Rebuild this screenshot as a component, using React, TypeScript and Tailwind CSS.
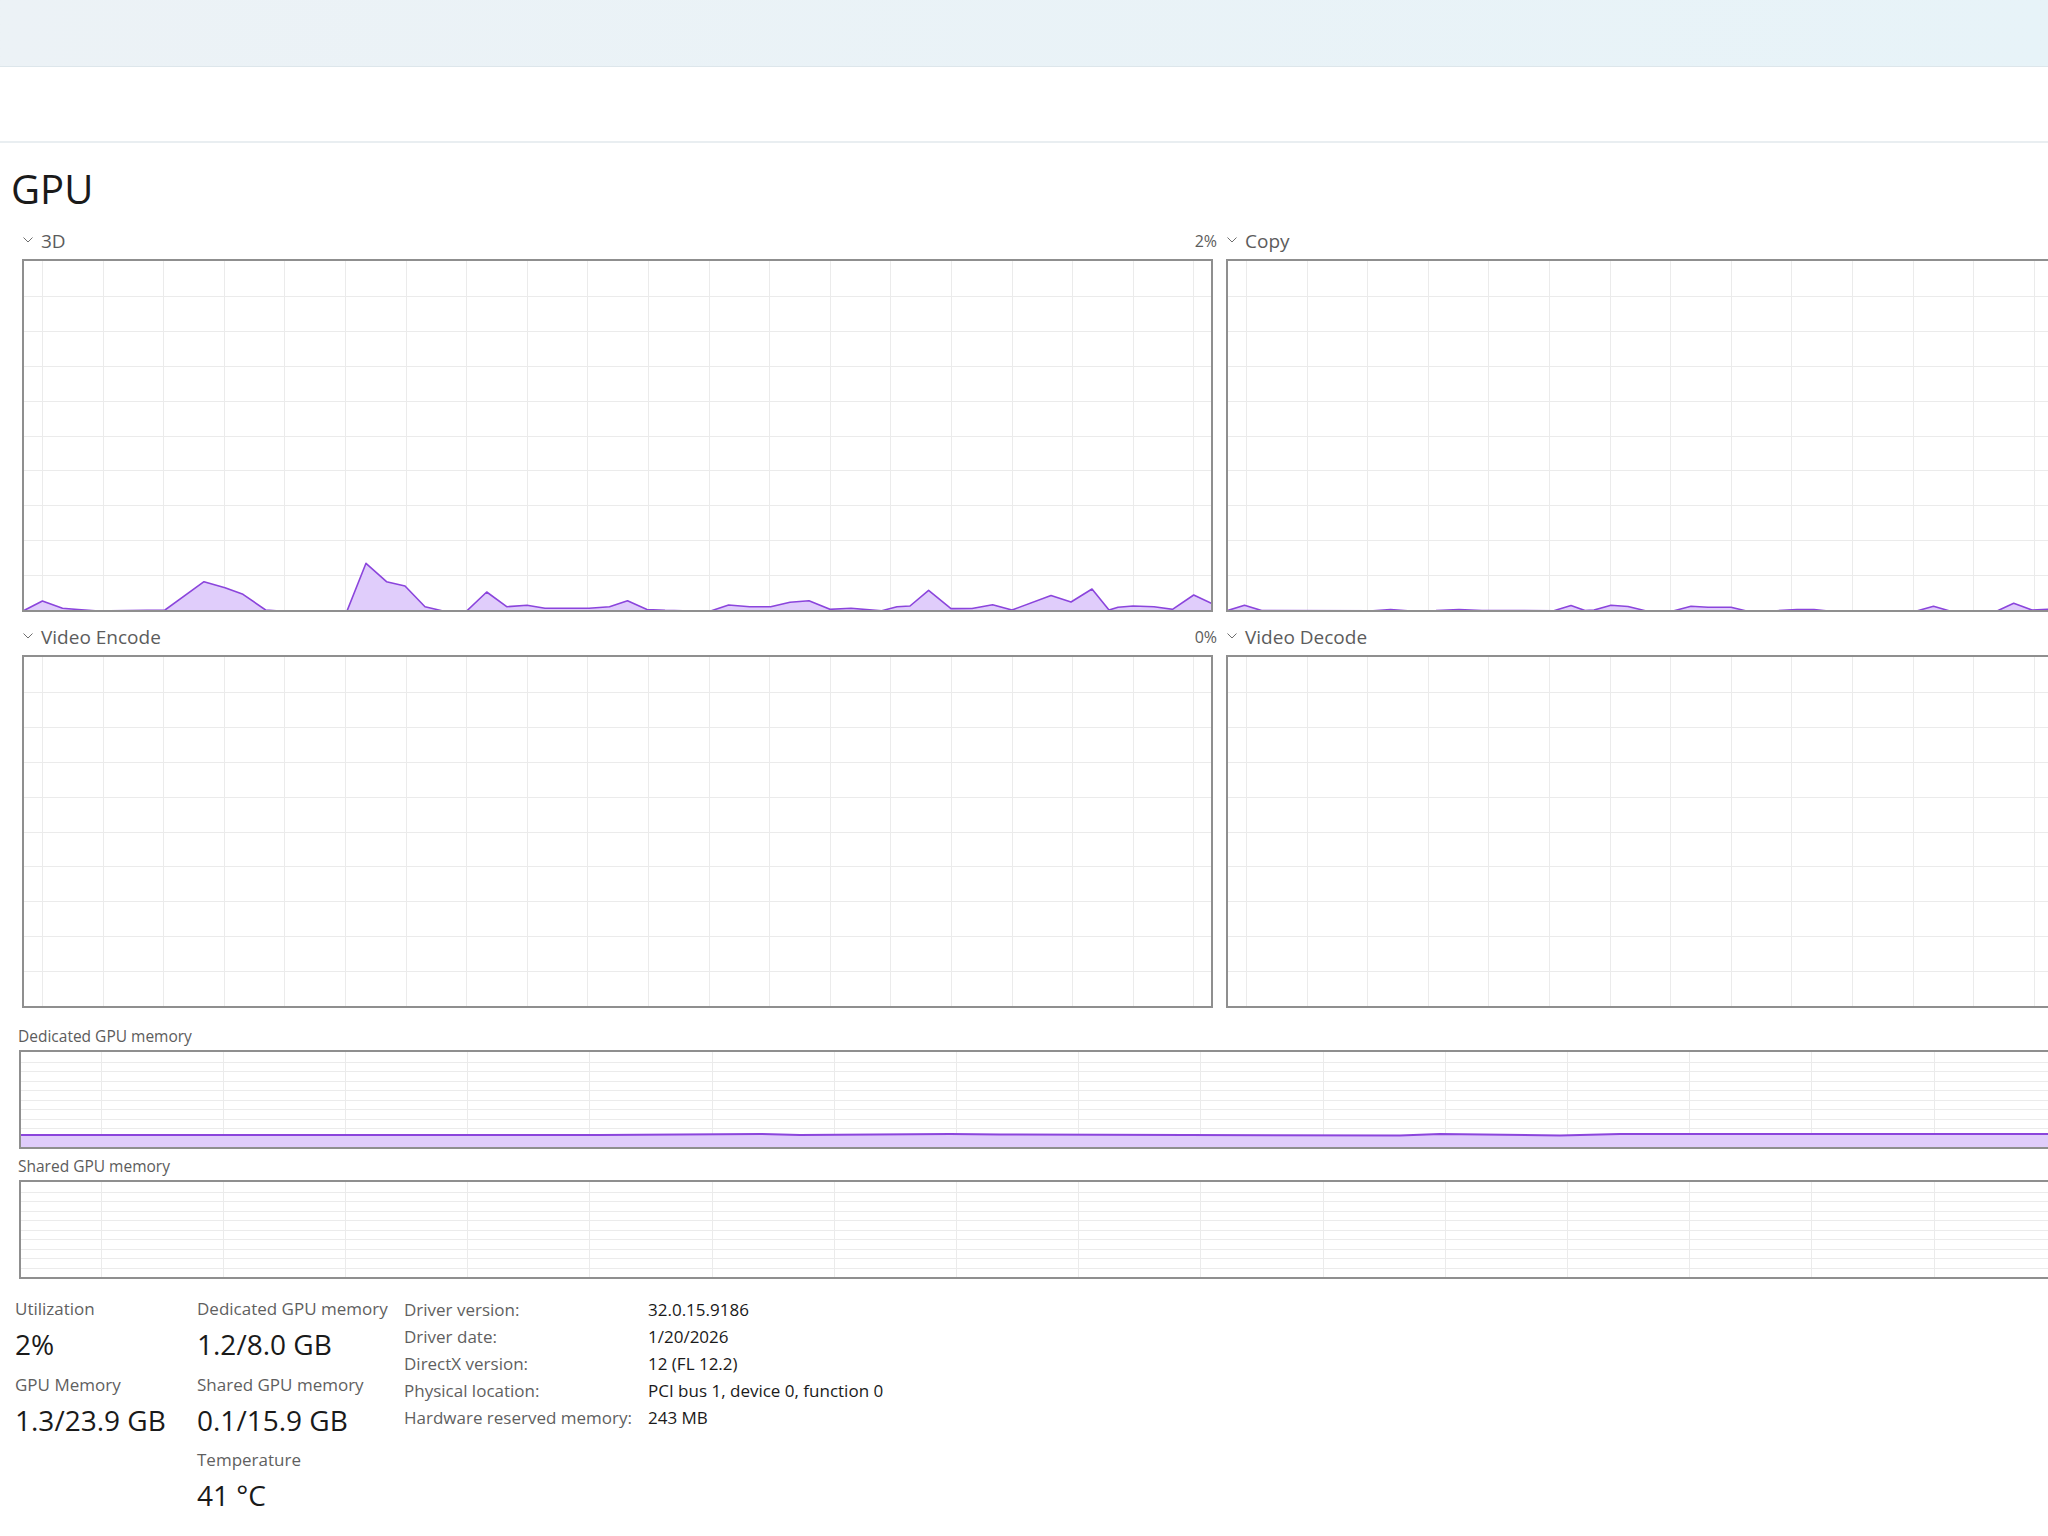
import React from "react";

// GPU performance page, Task Manager style.

type Pt = [number, number];

const GRID = "#ebebeb";
const LINE = "#8b45dc";
const FILL = "#e0cdfb";

// page coordinates of the samples, converted to the plot's own space below
const load3d: Pt[] = [
  [23, 611], [42.4, 601], [62.5, 608.3], [78, 609.5], [98, 611], [129, 610.5], [165, 610],
  [204, 581.7], [225, 587.7], [243, 594.3], [265.6, 610], [279, 611], [347, 611],
  [366, 563.3], [386.5, 581.7], [405, 586], [425, 606.7], [442, 610.7], [467, 610.7],
  [486.7, 592], [506.7, 606.7], [527, 605.2], [545, 608.3], [589, 608.3], [609.5, 606.7],
  [627.5, 600.8], [647, 609.5], [665, 610.3], [683, 610.7], [711.4, 610.7], [728.6, 605],
  [749.7, 606.7], [770.7, 606.7], [790, 602.3], [809, 600.7], [830, 609.3], [851, 608.3],
  [881.7, 610.7], [897, 606.7], [910, 606], [928.6, 590.3], [951, 608.6], [972, 608.5],
  [992.6, 604.7], [1012, 610], [1051, 595.5], [1071, 602], [1092, 589], [1109, 610],
  [1118, 607.3], [1133, 606], [1154, 606.7], [1172.5, 609.3], [1193.7, 595], [1213, 604],
];

const loadCopy: Pt[] = [
  [1227, 610.7], [1244.5, 605.3], [1261.7, 610.5], [1373, 610.7], [1390.5, 609.5],
  [1407.7, 610.7], [1436, 610.5], [1459, 609.5], [1482, 610.5], [1553.8, 610.7],
  [1571, 605.5], [1585, 610.5], [1594, 610], [1611, 605.3], [1628, 606.5], [1645.4, 610.7],
  [1674, 610.7], [1691, 606.3], [1708, 607.3], [1731, 607.3], [1745.6, 610.7], [1777, 610.7],
  [1797, 609.5], [1814, 609.5], [1826, 610.7], [1917.5, 610.7], [1933.5, 606.3],
  [1949, 610.7], [1997.6, 610.7], [2013.7, 603.3], [2032, 610], [2048, 609.3], [2070, 610.7],
];

const dedicated: Pt[] = [
  [19, 1135], [600, 1135], [760, 1134], [800, 1135], [950, 1134], [1000, 1134.5],
  [1400, 1135.5], [1440, 1134], [1560, 1135.5], [1620, 1134], [2421, 1134],
];

function Plot({
  w, h, ox, oy, colStart, colStep, rows, pts, lineWidth = 1.6,
}: {
  w: number; h: number; ox: number; oy: number;
  colStart: number; colStep: number; rows: number; pts?: Pt[]; lineWidth?: number;
}) {
  const cols: number[] = [];
  for (let x = colStart; x < w; x += colStep) cols.push(Math.round(x) + 0.5);
  const hl: number[] = [];
  for (let i = 1; i < rows; i++) hl.push(Math.round((i * h) / rows) + 0.5);

  const p = (pts ?? []).map(([x, y]) => [x - ox, y - oy] as Pt);
  const line = p.map(([x, y]) => `${x},${y}`).join(" ");
  const area = p.length
    ? `M${p[0][0]},${h + 2} ` + p.map(([x, y]) => `L${x},${y}`).join(" ") + ` L${p[p.length - 1][0]},${h + 2} Z`
    : "";

  return (
    <svg width={w} height={h} className="block">
      {cols.map((x) => (
        <line key={"v" + x} x1={x} x2={x} y1={0} y2={h} stroke={GRID} strokeWidth={1} />
      ))}
      {hl.map((y) => (
        <line key={"h" + y} x1={0} x2={w} y1={y} y2={y} stroke={GRID} strokeWidth={1} />
      ))}
      {p.length > 0 && (
        <>
          <path d={area} fill={FILL} />
          <polyline points={line} fill="none" stroke={LINE} strokeWidth={lineWidth} strokeLinejoin="round" />
        </>
      )}
    </svg>
  );
}

function Chevron() {
  return (
    <svg width="10" height="6" viewBox="0 0 10 6" className="mb-[3px] shrink-0">
      <polyline points="0.5,0.5 5,5 9.5,0.5" fill="none" stroke="#6e6e6e" strokeWidth="1" />
    </svg>
  );
}

function EngineGraph({ label, pct, ox, pts }: { label: string; pct?: string; ox: number; pts?: Pt[] }) {
  return (
    <div className="w-[1195px]">
      <div className="flex h-[24px] items-center justify-between">
        <div className="flex items-center gap-[8px] pl-[1px]">
          <Chevron />
          <span className="text-[19px] leading-[24px] text-[#5c5c5c]">{label}</span>
        </div>
        {pct && <span className="text-[16px] leading-[24px] text-[#5c5c5c]">{pct}</span>}
      </div>
      <div className="mt-[6px] h-[353px] w-[1191px] border-2 border-[#8f8f8f] bg-white">
        <Plot w={1187} h={349} ox={ox} oy={261} colStart={18} colStep={60.6} rows={10} pts={pts} />
      </div>
    </div>
  );
}

function MemoryGraph({ label, pts }: { label: string; pts?: Pt[] }) {
  return (
    <div>
      <div className="text-[15.5px] leading-[20px] text-[#5c5c5c]">{label}</div>
      <div className="ml-[1px] mt-[4px] h-[99px] w-[2402px] border-2 border-[#8f8f8f] bg-white">
        <Plot w={2398} h={95} ox={21} oy={1052} colStart={79.5} colStep={122.2} rows={10} pts={pts} lineWidth={2} />
      </div>
    </div>
  );
}

function Stat({ label, value, className }: { label: string; value: string; className?: string }) {
  return (
    <div className={className}>
      <div className="text-[17px] leading-[24px] text-[#5f5f5f]">{label}</div>
      <div className="mt-[3px] text-[28px] leading-[40px] text-[#1a1a1a]">{value}</div>
    </div>
  );
}

const driverInfo: [string, string][] = [
  ["Driver version:", "32.0.15.9186"],
  ["Driver date:", "1/20/2026"],
  ["DirectX version:", "12 (FL 12.2)"],
  ["Physical location:", "PCI bus 1, device 0, function 0"],
  ["Hardware reserved memory:", "243 MB"],
];

export default function App() {
  return (
    <div className="h-[1536px] w-full overflow-hidden bg-white font-['Open_Sans','Noto_Sans',sans-serif]">
      <div className="h-[67px] border-b border-[#dde6eb] bg-linear-to-r from-[#ecf2f6] to-[#e7f3f8]" />
      <div className="h-[76px] border-b-2 border-[#e9eef1]" />

      <h1 className="mt-[22px] pl-[11px] text-[40px] font-normal leading-[48px] text-[#1a1a1a]">GPU</h1>

      <div className="mt-[16px] grid w-max grid-cols-[1195px_1195px] gap-x-[9px] gap-y-[13px] pl-[22px]">
        <EngineGraph label="3D" pct="2%" ox={24} pts={load3d} />
        <EngineGraph label="Copy" ox={1228} pts={loadCopy} />
        <EngineGraph label="Video Encode" pct="0%" ox={24} />
        <EngineGraph label="Video Decode" ox={1228} />
      </div>

      <div className="mt-[18px] flex w-max flex-col gap-[7px] pl-[18px]">
        <MemoryGraph label="Dedicated GPU memory" pts={dedicated} />
        <MemoryGraph label="Shared GPU memory" />
      </div>

      <div className="mt-[18px] flex items-start pl-[15px]">
        <div className="w-[182px]">
          <Stat label="Utilization" value="2%" />
          <Stat label="GPU Memory" value="1.3/23.9 GB" className="mt-[9px]" />
        </div>
        <div className="w-[207px]">
          <Stat label="Dedicated GPU memory" value="1.2/8.0 GB" />
          <Stat label="Shared GPU memory" value="0.1/15.9 GB" className="mt-[9px]" />
          <Stat label="Temperature" value="41 °C" className="mt-[8px]" />
        </div>
        <div className="mt-[-1px] grid grid-cols-[244px_auto] content-start text-[17px] leading-[27px]">
          {driverInfo.map(([k, v]) => (
            <React.Fragment key={k}>
              <span className="text-[#5f5f5f]">{k}</span>
              <span className="text-[#1a1a1a]">{v}</span>
            </React.Fragment>
          ))}
        </div>
      </div>
    </div>
  );
}
